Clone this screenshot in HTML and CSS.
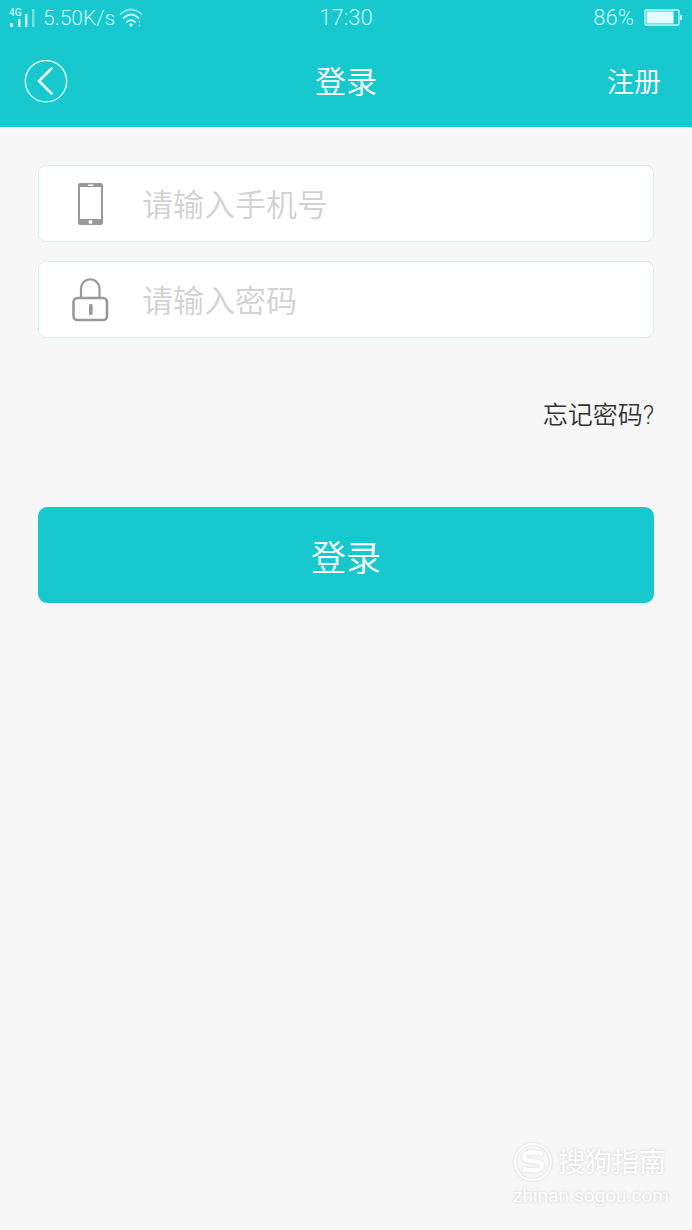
FILE: index.html
```html
<!DOCTYPE html>
<html lang="zh-CN">
<head>
<meta charset="utf-8">
<meta name="viewport" content="width=device-width, initial-scale=1">
<title>登录</title>
<link rel="stylesheet" href="styles.css">
</head>
<body>
<header class="top">
  <div class="status">
    <div class="status-left">
      <svg class="signal" width="26" height="20" viewBox="0 0 26 20" aria-hidden="true">
        <text class="signal-label" x="0" y="8">4G</text>
        <path d="M1 15h3v4H1zM9 11h2.500v8H9zM16 6h2.500v13h-2.500z" fill="currentColor"/>
        <path d="M23 1h2.500v18h-2.500z" fill="currentColor" opacity=".5"/>
      </svg>
      <span class="speed">5.50K/s</span>
      <svg class="wifi" width="24" height="20" viewBox="0 0 24 20" fill="none" stroke="currentColor" stroke-width="1.800" stroke-linecap="round" aria-hidden="true">
        <path d="M1.500 6Q12-3 22.500 6" opacity=".6"/>
        <path d="M4.500 10Q12 3 19.500 10M8 14Q12 10.500 16 14"/>
        <circle cx="12" cy="17" r="1.700" fill="currentColor" stroke="none"/>
        <path d="M20.500 14v.1M20.500 17.500v.1" opacity=".5"/>
      </svg>
    </div>
    <span>17:30</span>
    <div class="status-right">
      <span>86%</span>
      <svg width="39" height="18" viewBox="0 0 39 18" aria-hidden="true">
        <rect x="1" y="1" width="34" height="15" rx="1" fill="none" stroke="currentColor" stroke-width="1.300"/>
        <rect class="charge" x="2.500" y="2.500" width="27" height="12"/>
        <rect x="36" y="6" width="2" height="5" fill="currentColor"/>
      </svg>
    </div>
  </div>
  <nav class="bar">
    <button class="back" type="button" aria-label="返回">
      <svg width="44" height="44" viewBox="0 0 44 44" fill="none" stroke="currentColor" aria-hidden="true">
        <circle cx="22" cy="21.200" r="20.700" stroke-width="1.300"/>
        <path d="M27.500 8.500L15 21L27.500 33.500" stroke-width="2.600" stroke-linecap="round"/>
      </svg>
    </button>
    <h1 class="title">登录</h1>
    <a class="register" href="#">注册</a>
  </nav>
</header>
<main class="main">
  <form class="form">
    <label class="field">
      <svg class="field-icon" width="44" height="44" viewBox="0 0 44 44" aria-hidden="true">
        <path fill="#999" fill-rule="evenodd" d="M11 1H32a2 2 0 0 1 2 2V41a2 2 0 0 1-2 2H11a2 2 0 0 1-2-2V3a2 2 0 0 1 2-2zM11 5V37H32V5zM19 2.500H24V4H19zM21.500 38a2 2 0 1 0 0 4a2 2 0 1 0 0-4z"/>
      </svg>
      <input class="input" type="tel" placeholder="请输入手机号" aria-label="手机号">
    </label>
    <label class="field">
      <svg class="field-icon" width="44" height="44" viewBox="0 0 44 44" fill="none" stroke="#999" aria-hidden="true">
        <path d="M12 20V11a9 9.500 0 0 1 18.500 0V20" stroke-width="2.200"/>
        <rect x="4.500" y="20" width="33.500" height="22" rx="4" stroke-width="2.600"/>
        <path d="M21.800 27.500V35.500" stroke-width="3.600" stroke-linecap="round"/>
      </svg>
      <input class="input" type="password" placeholder="请输入密码" aria-label="密码">
    </label>
    <a class="forgot" href="#">忘记密码?</a>
    <button class="submit" type="submit">登录</button>
  </form>
</main>
<footer class="mark">
  <div class="mark-row">
    <svg width="40" height="40" viewBox="0 0 40 40" fill="none" stroke="currentColor" aria-hidden="true">
      <circle cx="20" cy="20" r="18" stroke-width="2"/>
      <path d="M30 12Q12 8 11 15C11 21 29 17 29 24Q27 31 10 27" stroke-width="4.500"/>
    </svg>
    <span class="mark-name">搜狗指南</span>
  </div>
  <div class="mark-url">zhinan.sogou.com</div>
</footer>
</body>
</html>
```
FILE: styles.css
```css
* { box-sizing: border-box; }

body {
  margin: 0;
  min-height: 100vh;
  display: flex;
  flex-direction: column;
  background: #f7f7f7;
  color: #333;
  font-family: Roboto, "Noto Sans CJK SC", sans-serif;
  font-weight: 350;
}

a { color: inherit; text-decoration: none; }
svg { display: block; flex: none; }

.top { background: #18c8cf; color: #fff; }

.status {
  display: grid;
  grid-template-columns: 1fr auto 1fr;
  align-items: center;
  height: 36px;
  padding: 0 9px;
  font-size: 22px;
  line-height: 36px;
  color: #c9f8fa;
}
.status-left, .status-right { display: flex; align-items: center; }
.status-left { gap: 8px; }
.status-right { justify-content: flex-end; gap: 10px; }
.speed { font-size: 21px; }
.wifi { margin-left: -4px; }
.signal { overflow: visible; }
.signal-label { fill: currentColor; font-size: 10px; font-weight: 500; }
.charge { fill: #e6fdfd; }

.bar {
  display: grid;
  grid-template-columns: 1fr auto 1fr;
  align-items: center;
  height: 91px;
  padding: 0 31px 0 24px;
}
.back {
  justify-self: start;
  padding: 0;
  border: 0;
  background: none;
  color: #e8ffff;
}
.title {
  margin: 0 0 0 7px;
  padding-top: 3px;
  font-size: 31px;
  font-weight: inherit;
  line-height: 40px;
}
.register { justify-self: end; padding-top: 3px; font-size: 27px; line-height: 40px; }

.main { flex: 1; padding: 38px 38px 0; }
.form { display: flex; flex-direction: column; }
.field {
  display: flex;
  align-items: center;
  gap: 29px;
  height: 77px;
  margin-bottom: 19px;
  padding: 0 30px;
  border: 1px solid #d9efec;
  border-radius: 8px;
  background: #fff;
}
.input {
  flex: 1;
  min-width: 0;
  padding: 5px 0 0;
  border: 0;
  outline: 0;
  background: none;
  color: #333;
  font: inherit;
  font-size: 31px;
  line-height: 44px;
}
.input::placeholder { color: #d2d2d2; opacity: 1; }

.forgot {
  align-self: flex-end;
  margin-top: 39px;
  font-size: 25px;
  line-height: 40px;
}
.submit {
  height: 96px;
  margin-top: 71px;
  border: 0;
  border-radius: 9px;
  background: #18c8cf;
  color: #fff;
  font: inherit;
  font-size: 35px;
}

.mark {
  align-self: flex-end;
  padding: 0 23px 21px 0;
  color: #fdfdfd;
  font-weight: 400;
  text-shadow: 0 0 3px #ccc;
}
.mark svg { filter: drop-shadow(0 0 1px #d6d6d6); }
.mark-row { display: flex; align-items: center; gap: 5px; font-size: 27px; line-height: 40px; }
.mark-name { padding-top: 3px; }
.mark-url { font-size: 19px; line-height: 26px; }
```
